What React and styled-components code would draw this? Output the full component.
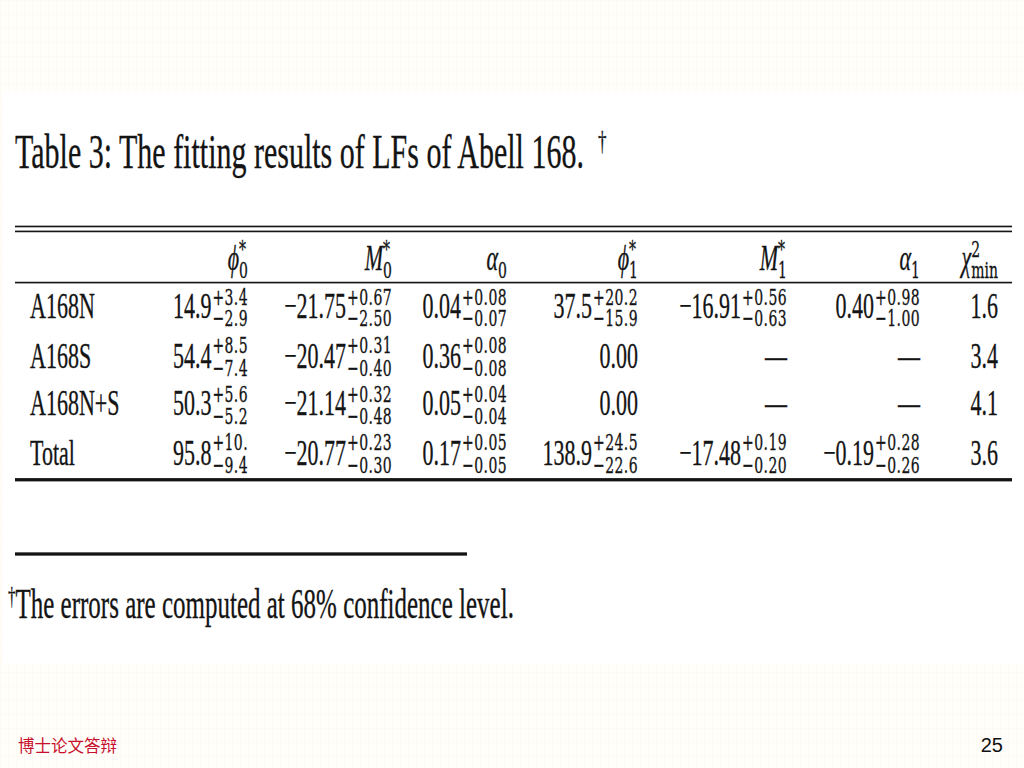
import React from "react";
import styled, { createGlobalStyle } from "styled-components";

// the scanned table in the slide is stretched vertically, so the sheet is scaled
const STRETCH = 1.65;

const rows = [
    {
        name: "A168N",
        cells: [
            ["14.9", "+3.4", "−2.9"],
            ["−21.75", "+0.67", "−2.50"],
            ["0.04", "+0.08", "−0.07"],
            ["37.5", "+20.2", "−15.9"],
            ["−16.91", "+0.56", "−0.63"],
            ["0.40", "+0.98", "−1.00"],
            ["1.6"],
        ],
    },
    {
        name: "A168S",
        cells: [
            ["54.4", "+8.5", "−7.4"],
            ["−20.47", "+0.31", "−0.40"],
            ["0.36", "+0.08", "−0.08"],
            ["0.00"],
            ["—"],
            ["—"],
            ["3.4"],
        ],
    },
    {
        name: "A168N+S",
        cells: [
            ["50.3", "+5.6", "−5.2"],
            ["−21.14", "+0.32", "−0.48"],
            ["0.05", "+0.04", "−0.04"],
            ["0.00"],
            ["—"],
            ["—"],
            ["4.1"],
        ],
    },
    {
        name: "Total",
        cells: [
            ["95.8", "+10.", "−9.4"],
            ["−20.77", "+0.23", "−0.30"],
            ["0.17", "+0.05", "−0.05"],
            ["138.9", "+24.5", "−22.6"],
            ["−17.48", "+0.19", "−0.20"],
            ["−0.19", "+0.28", "−0.26"],
            ["3.6"],
        ],
    },
];

const headers = [
    { sym: "ϕ", up: "*", down: "0" },
    { sym: "M", up: "*", down: "0" },
    { sym: "α", up: "", down: "0" },
    { sym: "ϕ", up: "*", down: "1" },
    { sym: "M", up: "*", down: "1" },
    { sym: "α", up: "", down: "1" },
    { sym: "χ", up: "2", down: "min" },
];

function Value({ main, up, down }) {
    return (
        <>
            {main}
            {(up || down) && (
                <Scripts>
                    <span>{up || "\u00a0"}</span>
                    <span>{down || "\u00a0"}</span>
                </Scripts>
            )}
        </>
    );
}

export default function App() {
    return (
        <Slide>
            <GlobalStyle />
            <Figure>
                <Sheet>
                    <Title>
                        Table 3: The fitting results of LFs of Abell 168.
                        <Dagger $gap="14px">†</Dagger>
                    </Title>
                    <Table>
                        <DoubleRule />
                        <Row $h="30px" $pad="2px">
                            <Cell $left />
                            {headers.map((h, i) => (
                                <Cell key={i}>
                                    <Sym>{h.sym}</Sym>
                                    <Scripts $head>
                                        <span>{h.up || "\u00a0"}</span>
                                        <span>{h.down}</span>
                                    </Scripts>
                                </Cell>
                            ))}
                        </Row>
                        <Rule $t="1.2px" />
                        {rows.map((r) => (
                            <Row key={r.name} $h="29.5px" $pad="0px">
                                <Cell $left>{r.name}</Cell>
                                {r.cells.map((c, i) => (
                                    <Cell key={i}>
                                        <Value main={c[0]} up={c[1]} down={c[2]} />
                                    </Cell>
                                ))}
                            </Row>
                        ))}
                        <Rule $t="1.8px" />
                    </Table>
                    <FootRule />
                    <Footnote>
                        <Dagger $gap="0px" $small>†</Dagger>
                        The errors are computed at 68% confidence level.
                    </Footnote>
                </Sheet>
            </Figure>
            <Footer>
                <Brand>博士论文答辩</Brand>
                <PageNo>25</PageNo>
            </Footer>
        </Slide>
    );
}

const GlobalStyle = createGlobalStyle`
    html, body {
        margin: 0;
        padding: 0;
    }
    body {
        background: #fffefa;
    }
`;

const Slide = styled.div`
    width: 1024px;
    height: 768px;
    display: flex;
    flex-direction: column;
    padding-top: 92px;
    box-sizing: border-box;
    overflow: hidden;
    background-color: #fffefa;
    background-image:
        linear-gradient(rgba(240, 234, 196, 0.14) 1px, transparent 1px),
        linear-gradient(90deg, rgba(240, 234, 196, 0.14) 1px, transparent 1px);
    background-size: 8px 14px;
`;

const Figure = styled.div`
    margin-left: 3px;
    width: 1021px;
    height: 571px;
    background: #fff;
    overflow: hidden;
    flex-shrink: 0;
`;

const Sheet = styled.div`
    transform: scaleY(${STRETCH});
    transform-origin: top left;
    display: flex;
    flex-direction: column;
    align-items: flex-start;
    color: #141414;
    font-family: "Liberation Serif", "Times New Roman", serif;
    -webkit-text-stroke: 0.2px #141414;
`;

const Title = styled.h1`
    margin: 15px 0 0 12px;
    font-size: 30px;
    line-height: 30px;
    font-weight: normal;
    white-space: nowrap;
`;

const Dagger = styled.span`
    margin-left: ${(p) => p.$gap};
    font-size: ${(p) => (p.$small ? "15px" : "17px")};
    vertical-align: ${(p) => (p.$small ? "9px" : "11px")};
`;

const Table = styled.div`
    margin: 29.5px 0 0 12px;
    width: 997px;
`;

const DoubleRule = styled.div`
    height: 2.4px;
    border-top: 1.2px solid #141414;
    border-bottom: 1.2px solid #141414;
`;

const Rule = styled.div`
    height: ${(p) => p.$t};
    background: #141414;
`;

const Row = styled.div`
    display: grid;
    grid-template-columns: 115px 118px 144px 115px 131px 149px 133px 78px;
    padding-right: 14px;
    height: ${(p) => p.$h};
    padding-top: ${(p) => p.$pad};
    box-sizing: border-box;
    font-size: 22px;
    line-height: 27px;
`;

const Cell = styled.div`
    text-align: ${(p) => (p.$left ? "left" : "right")};
    padding-left: ${(p) => (p.$left ? "15px" : "0")};
    white-space: nowrap;
`;

const Sym = styled.span`
    font-style: italic;
`;

const Scripts = styled.span`
    display: inline-flex;
    flex-direction: column;
    align-items: flex-start;
    vertical-align: 8.2px;
    margin-left: ${(p) => (p.$head ? "0" : "1px")};
    font-family: "DejaVu Serif", "Liberation Serif", serif;
    font-size: 14px;
    line-height: 13.4px;
    letter-spacing: ${(p) => (p.$head ? "0" : "0.4px")};
    text-align: left;
`;

const FootRule = styled.div`
    margin: 43.6px 0 0 12px;
    width: 452px;
    height: 1.2px;
    background: #141414;
`;

const Footnote = styled.p`
    margin: 12px 0 0 5px;
    font-size: 25px;
    line-height: 25px;
    white-space: nowrap;
`;

const Footer = styled.div`
    margin-top: auto;
    display: flex;
    justify-content: space-between;
    align-items: center;
    padding: 0 21px 11px 18px;
    line-height: 24px;
`;

const Brand = styled.span`
    color: #c8102e;
    font-family: "Noto Sans CJK SC", sans-serif;
    font-size: 16.5px;
`;

const PageNo = styled.span`
    color: #111;
    font-family: "Liberation Sans Narrow", "Liberation Sans", sans-serif;
    font-size: 20px;
`;
